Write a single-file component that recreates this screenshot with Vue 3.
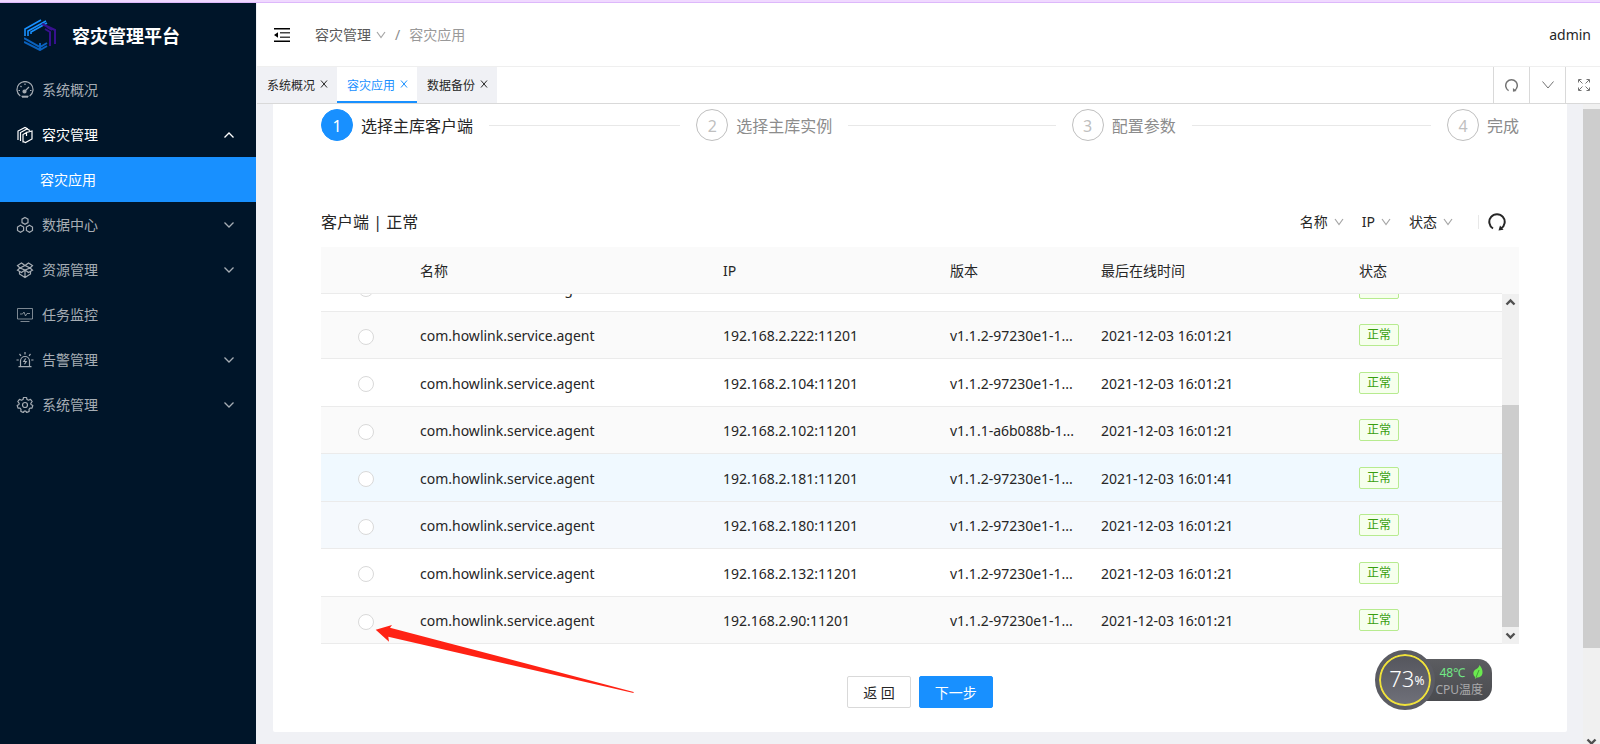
<script setup>
import { ref } from 'vue'

const menu = [
  { key: 'overview', label: '系统概况', arrow: '' },
  { key: 'disaster', label: '容灾管理', arrow: 'up', open: true, children: ['容灾应用'] },
  { key: 'data', label: '数据中心', arrow: 'down' },
  { key: 'resource', label: '资源管理', arrow: 'down' },
  { key: 'monitor', label: '任务监控', arrow: '' },
  { key: 'alarm', label: '告警管理', arrow: 'down' },
  { key: 'system', label: '系统管理', arrow: 'down' },
]
const tabs = ['系统概况', '容灾应用', '数据备份']
const activeTab = ref('容灾应用')
const steps = ['选择主库客户端', '选择主库实例', '配置参数', '完成']
const filters = ['名称', 'IP', '状态']
const columns = ['', '名称', 'IP', '版本', '最后在线时间', '状态']
const v = 'v1.1.2-97230e1-1...'
const rows = [
  { ip: '192.168.2.221:11201', version: v, time: '2021-12-03 16:01:21', tone: '' },
  { ip: '192.168.2.222:11201', version: v, time: '2021-12-03 16:01:21', tone: 'stripe' },
  { ip: '192.168.2.104:11201', version: v, time: '2021-12-03 16:01:21', tone: '' },
  { ip: '192.168.2.102:11201', version: 'v1.1.1-a6b088b-1...', time: '2021-12-03 16:01:21', tone: 'stripe' },
  { ip: '192.168.2.181:11201', version: v, time: '2021-12-03 16:01:41', tone: 'hover' },
  { ip: '192.168.2.180:11201', version: v, time: '2021-12-03 16:01:21', tone: 'fade' },
  { ip: '192.168.2.132:11201', version: v, time: '2021-12-03 16:01:21', tone: '' },
  { ip: '192.168.2.90:11201', version: v, time: '2021-12-03 16:01:21', tone: 'stripe' },
]
const picked = ref('')
</script>

<template>
  <div class="page">
    <div class="strip"></div>
    <div class="shell">
      <aside class="sider">
        <div class="brand">
          <svg class="logo" viewBox="0 0 32 32" fill="none" stroke-width="2">
            <path d="M1 17V10L17 1M4 17V12L22 2M7 15V13L23 4" stroke="#1890ff" stroke-width="1.6" />
            <path d="M0 19L16 28L23 24M0 23L16 31L23 27M16 24V31" stroke="#0a62bf" />
            <path d="M18 5L31 11V25M21 10L26 13V27M23 8L28 11" stroke="#37118f" />
          </svg>
          <h1>容灾管理平台</h1>
        </div>
        <nav class="menu">
          <template v-for="m in menu" :key="m.key">
            <a href="#" class="item" :class="{ open: m.open }">
              <svg class="mi" viewBox="0 0 18 18" fill="none" stroke="currentColor" stroke-width="1.2">
                <template v-if="m.key === 'overview'">
                  <path d="M4.3 15A8 8 0 1 1 13.7 15M5.5 15.4H12.5" />
                  <path d="M6 15.8H12" stroke-width="1.8" />
                  <path d="M8 11L13 6M9 2.5V4M2.5 9.5H4M14 9.5H15.500M4.500 5L5.500 6" />
                  <circle cx="8.500" cy="10.500" r="1.500" fill="currentColor" />
                </template>
                <template v-else-if="m.key === 'disaster'">
                  <path d="M2 14V5L9 1.500L12 3M4.500 15V6.500L11 3L14 4.500M7 16.500V8.500L10.500 6.500V10M10.500 6.500L16 5V13L9.500 16.500L7 15.500" />
                </template>
                <template v-else-if="m.key === 'data'">
                  <path d="M9 1.500L12 3.200V6.600L9 8.300L6 6.600V3.200ZM4.500 9.300L7.600 11V14.400L4.500 16.200L1.500 14.400V11ZM13.500 9.300L16.500 11V14.400L13.500 16.200L10.400 14.400V11Z" />
                </template>
                <template v-else-if="m.key === 'resource'">
                  <path d="M9 4.500L5.500 2L1.500 4.500L4 7L1.500 9.200L5.500 11.500L9 9L12.500 11.500L16.500 9.200L14 7L16.500 4.500L12.500 2ZM4 7L9 4.500L14 7L9 9ZM3.500 10.500V13L9 16.500L14.500 13V10.500M9 9V16" />
                </template>
                <template v-else-if="m.key === 'monitor'">
                  <path d="M1.500 2.500H16.500V13H1.500ZM4.500 15.500H13.500M4 8H6.500L8 6L9.500 10L11 7.500H14" stroke-width="1" opacity=".75" />
                </template>
                <template v-else-if="m.key === 'alarm'">
                  <path d="M4.500 15V10A4.500 4.500 0 0 1 13.500 10V15M2.500 15.700H15.500M9 1V3.500M3.500 3L5 4.800M14.500 3L13 4.800M0.500 9H2.800M15.200 9H17.500M9.700 7.500L7.800 10.500H10.200L8.500 13.200" />
                </template>
                <template v-else>
                  <path d="M7.500 1.500H10.500L11 3.500L12.500 4.200L14.500 3.300L16.200 5.500L14.800 7.300L15 8.500L16.800 9.500L16 12.200L14 12.200L13 13.400L13.200 15.400L10.800 16.500L9.500 15H8.500L7.200 16.500L4.800 15.400L5 13.400L4 12.200L2 12.200L1.200 9.500L3 8.500L3.200 7.300L1.800 5.500L3.500 3.300L5.500 4.200L7 3.500Z" stroke-linejoin="round" />
                  <circle cx="9" cy="9" r="2.500" />
                </template>
              </svg>
              <span class="label">{{ m.label }}</span>
              <svg v-if="m.arrow" class="arrow" :class="m.arrow" viewBox="0 0 10 6"><path d="M0.500 0.500L5 5L9.500 0.500" /></svg>
            </a>
            <a v-for="c in m.children" :key="c" href="#" class="item sub">{{ c }}</a>
          </template>
        </nav>
      </aside>

      <main class="main">
        <header class="topbar">
          <button class="fold" aria-label="收起菜单">
            <svg viewBox="0 0 16 14" width="16" height="14"><path d="M0 0H16V1.500H0ZM0 12.500H16V14H0ZM0 7L4 4.300V9.700Z" /><path d="M6 4H16V5.500H6ZM6 8.500H16V10H6Z" fill="#444" /></svg>
          </button>
          <nav class="crumbs">
            <a href="#">容灾管理</a>
            <svg class="chev" viewBox="0 0 10 8"><path d="M1 1L5 6.500L9 1" /></svg>
            <span class="slash">/</span>
            <span class="here">容灾应用</span>
          </nav>
          <span class="user">admin</span>
        </header>

        <div class="tabbar">
          <div v-for="t in tabs" :key="t" class="tab" :class="{ on: t === activeTab }">
            <button class="tabname" @click="activeTab = t">{{ t }}</button>
            <button class="close" :aria-label="'关闭' + t">
              <svg viewBox="0 0 8 8" width="8" height="8"><path d="M1 0.500L7 7.500M7 0.500L1 7.500" /></svg>
            </button>
          </div>
          <div class="tools">
            <button aria-label="刷新">
              <svg viewBox="0 0 18 18" width="13" height="13" class="reload"><path d="M5 16A8 8 0 1 1 13 16" /><path class="tip" d="M11 12.500L16 16.500L11 17.500Z" /></svg>
            </button>
            <button aria-label="更多">
              <svg viewBox="0 0 12 8" width="12" height="8"><path d="M0.500 0.500L6 7L11.500 0.500" /></svg>
            </button>
            <button aria-label="全屏">
              <svg viewBox="0 0 12 12" width="12" height="12"><path d="M1 1L4.500 4.500M0.500 3.500V0.500H3.500M11 1L7.500 4.500M8.500 0.500H11.500V3.500M1 11L4.500 7.500M0.500 8.500V11.500H3.500M11 11L7.500 7.500M8.500 11.500H11.500V8.500" /></svg>
            </button>
          </div>
        </div>

        <div class="viewport">
          <section class="card">
            <ol class="steps">
              <li v-for="(s, i) in steps" :key="s" class="step" :class="{ on: i === 0 }">
                <span class="num">{{ i + 1 }}</span>
                <span class="name">{{ s }}</span>
              </li>
            </ol>

            <div class="toolbar">
              <h2>客户端 | 正常</h2>
              <div class="filters">
                <button v-for="f in filters" :key="f">
                  {{ f }}
                  <svg class="chev" viewBox="0 0 10 8"><path d="M1 1L5 6.500L9 1" /></svg>
                </button>
                <i class="divider"></i>
                <button class="refresh" aria-label="刷新列表">
                  <svg viewBox="0 0 18 18" width="18" height="18" class="reload"><path d="M5 15.500A7.700 7.700 0 1 1 13 15.500" /><path class="tip" d="M12 12.500L15.500 16.800L10.500 17.500Z" /></svg>
                </button>
              </div>
            </div>

            <div class="thead">
              <table>
                <colgroup><col v-for="n in 6" :key="n" :class="'c' + n" /></colgroup>
                <thead>
                  <tr><th v-for="c in columns" :key="c" scope="col">{{ c }}</th></tr>
                </thead>
              </table>
            </div>
            <div class="tbody">
              <div class="rows">
                <table>
                  <colgroup><col v-for="n in 6" :key="n" :class="'c' + n" /></colgroup>
                  <tbody>
                    <tr v-for="r in rows" :key="r.ip" :class="r.tone">
                      <td class="pick"><input v-model="picked" type="radio" name="client" :value="r.ip" :aria-label="r.ip" /></td>
                      <td>com.howlink.service.agent</td>
                      <td>{{ r.ip }}</td>
                      <td>{{ r.version }}</td>
                      <td>{{ r.time }}</td>
                      <td class="state"><span class="tag">正常</span></td>
                    </tr>
                  </tbody>
                </table>
              </div>
              <div class="scroll inner">
                <svg class="sa" viewBox="0 0 17 17"><path d="M4.500 10.500L8.500 6.500L12.500 10.500" /></svg>
                <div class="thumb"></div>
                <svg class="sa" viewBox="0 0 17 17"><path d="M4.500 6.500L8.500 10.500L12.500 6.500" /></svg>
              </div>
            </div>

            <div class="actions">
              <button class="btn">返 回</button>
              <button class="btn primary">下一步</button>
            </div>
          </section>
          <div class="scroll outer">
            <div class="thumb"></div>
            <svg class="sa" viewBox="0 0 17 17"><path d="M4.500 6.500L8.500 10.500L12.500 6.500" /></svg>
          </div>
        </div>
      </main>
    </div>

    <svg class="pointer" viewBox="0 0 260 70" width="260" height="70">
      <path d="M0.700 4.700L17 0L15 2.700L258.700 67L258.500 68L13.300 11.700L14 16.700Z" fill="#ff2214" />
    </svg>

    <div class="cpu">
      <div class="dial"><span class="load">73</span><span class="pct">%</span></div>
      <div class="temp">
        <span class="deg">48℃
          <svg viewBox="0 0 10 14" width="10" height="14"><path d="M6.500 0C9 3 10 5.500 9.300 9C8.800 11.500 6 13 3.500 12.500L2.500 14L2 12C-0.500 9.500 0 6 2.500 4.500C4.500 3.500 6 2 6.500 0Z" fill="#6be94f" /><path d="M3 12.500L6 5" stroke="#3c8a34" stroke-width=".8" /></svg>
        </span>
        <span>CPU温度</span>
      </div>
    </div>
  </div>
</template>

<style>
body {
  margin: 0;
  overflow: hidden;
}
</style>

<style scoped>
.page {
  position: relative;
  display: flex;
  flex-direction: column;
  height: 100vh;
  overflow: hidden;
  font: 14px/22px "Noto Sans", "Noto Sans CJK SC", sans-serif;
  color: #262626;
  background: #f0f1f5;
}
.page *,
.page *::after {
  box-sizing: border-box;
}
button {
  padding: 0;
  border: 0;
  background: none;
  font: inherit;
  color: inherit;
}
a {
  color: inherit;
  text-decoration: none;
}
svg {
  flex: none;
}
.strip {
  flex: none;
  height: 3px;
  background: #f0d9ff;
  border-bottom: 1px solid #ddb8fb;
}
.shell {
  flex: 1;
  min-height: 0;
  display: flex;
}

/* sidebar */
.sider {
  flex: none;
  width: 256px;
  background: #001529;
  color: #a6adb4;
}
.brand {
  display: flex;
  align-items: center;
  gap: 16px;
  height: 64px;
  padding-left: 24px;
}
.logo {
  width: 32px;
  height: 32px;
}
h1 {
  margin: 0;
  padding-top: 2px;
  font-size: 18px;
  font-weight: 700;
  color: #fff;
}
.item {
  display: flex;
  align-items: center;
  height: 45px;
  padding: 0 22px 0 16px;
}
.item.open {
  color: #fff;
}
.item.sub {
  padding-left: 40px;
  background: #1890ff;
  color: #fff;
}
.mi {
  width: 18px;
  height: 18px;
  margin-right: 8px;
}
.label {
  flex: 1;
}
.arrow {
  width: 10px;
  height: 6px;
  fill: none;
  stroke: currentColor;
  stroke-width: 1.3;
}
.arrow.up {
  transform: rotate(180deg);
}

/* header */
.main {
  flex: 1;
  min-width: 0;
  display: flex;
  flex-direction: column;
  border-left: 1px solid #f0f1f5;
}
.topbar {
  flex: none;
  display: flex;
  align-items: center;
  height: 64px;
  padding: 0 9px 0 17px;
  background: #fff;
  border-bottom: 1px solid #efefef;
}
.fold {
  display: flex;
  margin-right: 25px;
}
.crumbs {
  flex: 1;
  display: flex;
  align-items: center;
  color: #595959;
}
.chev {
  width: 10px;
  height: 8px;
  fill: none;
  stroke: #a6a6a6;
  stroke-width: 1.2;
}
.crumbs .chev {
  margin: 0 9px 0 5px;
}
.slash {
  margin-right: 9px;
  color: #8c8c8c;
}
.here {
  color: #999;
}
.tabbar {
  flex: none;
  display: flex;
  height: 37px;
  background: #fff;
  border-bottom: 1px solid #d9d9d9;
}
.tab {
  display: flex;
  align-items: center;
  gap: 5px;
  width: 80px;
  padding-left: 10px;
  background: #f0f1f5;
  border-bottom: 2px solid #f0f1f5;
  font-size: 12px;
}
.tab.on {
  background: #fff;
  border-color: #1890ff;
  color: #1890ff;
}
.tabname {
  padding-top: 3px;
}
.close {
  display: flex;
}
.close svg,
.tools svg {
  fill: none;
  stroke: currentColor;
}
.tools {
  display: flex;
  margin-left: auto;
  color: #737373;
}
.tools button {
  display: flex;
  align-items: center;
  justify-content: center;
  width: 36px;
  border-left: 1px solid #d9d9d9;
}
.tools button:last-child {
  width: 35px;
  padding-left: 2px;
}
.reload {
  fill: none;
  stroke: currentColor;
  stroke-width: 2;
}
.reload .tip {
  fill: currentColor;
  stroke: none;
}

/* content */
.viewport {
  flex: 1;
  min-height: 0;
  display: flex;
  align-items: flex-start;
}
.card {
  flex: 1;
  min-width: 0;
  margin: 0 16px 12px;
  padding: 5px 48px 24px;
  background: #fff;
  border-radius: 0 0 2px 2px;
}
.steps {
  display: flex;
  margin: 0 0 64px;
  padding: 0;
  list-style: none;
  font-size: 16px;
  line-height: 32px;
}
.step {
  flex: 1;
  display: flex;
  align-items: center;
  height: 32px;
  margin-right: 16px;
  color: #8c8c8c;
  white-space: nowrap;
}
.step:last-child {
  flex: none;
  margin-right: 0;
}
.step:not(:last-child)::after {
  content: "";
  flex: 1;
  height: 1px;
  margin-left: 16px;
  background: #e8e8e8;
}
.name {
  padding-top: 2px;
}
.num {
  flex: none;
  width: 32px;
  height: 32px;
  margin-right: 8px;
  border: 1px solid #bfbfbf;
  border-radius: 50%;
  line-height: 32px;
  text-align: center;
  color: #bfbfbf;
}
.on .num {
  border-color: #1890ff;
  background: #1890ff;
  color: #fff;
}
.on .name {
  color: #262626;
}
.toolbar {
  display: flex;
  align-items: center;
  justify-content: space-between;
  height: 34px;
  margin-bottom: 8px;
}
h2 {
  margin: 0;
  font-size: 16px;
  font-weight: 400;
}
.filters {
  display: flex;
  align-items: center;
  padding-right: 13px;
}
.filters button {
  display: flex;
  align-items: center;
  gap: 6px;
  margin-right: 18px;
}
.divider {
  width: 1px;
  height: 14px;
  margin: 0 9px 0 7px;
  background: #e8e8e8;
}
.filters .refresh {
  margin: 0;
}

/* table */
table {
  width: 100%;
  table-layout: fixed;
  border-collapse: separate;
  border-spacing: 0;
}
.c1 { width: 87px; }
.c2 { width: 303px; }
.c3 { width: 227px; }
.c4 { width: 151px; }
.c5 { width: 258px; }
.c6 { width: 155px; }
th,
td {
  height: 47px;
  padding: 2px 12px 0;
  border-bottom: 1px solid #ebebeb;
  font-weight: 400;
  text-align: left;
  vertical-align: middle;
  white-space: nowrap;
  overflow: hidden;
  text-overflow: ellipsis;
}
tr:nth-child(odd) td {
  height: 48px;
}
.thead {
  padding-right: 17px;
  background: #fafafa;
}
.tbody {
  display: flex;
  height: 350px;
}
.rows {
  flex: 1;
  display: flex;
  align-items: flex-end;
  overflow: hidden;
}
.stripe { background: #fafafa; }
.hover { background: #f0f9ff; }
.fade { background: #f5f9fd; }
.pick {
  padding: 3px 0 0 37px;
}
.state {
  padding-top: 0;
}
input[type="radio"] {
  appearance: none;
  display: block;
  width: 16px;
  height: 16px;
  margin: 0;
  border: 1px solid #d9d9d9;
  border-radius: 50%;
  background: #fff;
}
input[type="radio"]:checked {
  border: 5px solid #1890ff;
}
.tag {
  display: block;
  width: max-content;
  padding: 0 7px;
  border: 1px solid #b7eb8f;
  border-radius: 2px;
  background: #f6ffed;
  color: #389e0d;
  font-size: 12px;
  line-height: 20px;
}
.scroll {
  flex: none;
  display: flex;
  flex-direction: column;
  justify-content: space-between;
  width: 17px;
  background: #f0f0f0;
}
.scroll .thumb {
  background: #cdcdcd;
}
.sa {
  width: 17px;
  height: 17px;
  fill: none;
  stroke: #505050;
  stroke-width: 2.4;
}
.inner .thumb {
  height: 222px;
  margin-top: auto;
}
.outer {
  height: calc(100% + 6px);
  padding-top: 5px;
}
.outer .thumb {
  height: 539px;
}
.actions {
  display: flex;
  justify-content: center;
  gap: 8px;
  margin-top: 32px;
}
.btn {
  height: 32px;
  padding: 2px 15px 0;
  border: 1px solid #d9d9d9;
  border-radius: 2px;
  background: #fff;
}
.btn.primary {
  border-color: #1890ff;
  background: #1890ff;
  color: #fff;
}

/* floating overlays */
.pointer {
  position: absolute;
  left: 375px;
  top: 625px;
}
.cpu {
  position: absolute;
  right: 108px;
  bottom: 34px;
  display: flex;
  align-items: center;
}
.dial {
  display: flex;
  align-items: center;
  justify-content: center;
  width: 60px;
  height: 60px;
  padding: 0 0 4px 3px;
  border: 4px solid #5b5c63;
  border-radius: 50%;
  background: linear-gradient(#54555c, #70717a);
  box-shadow: inset 0 0 0 2px #f0e23a;
  color: #fff;
  z-index: 1;
}
.load {
  font: 22px/28px "Noto Sans", sans-serif;
  font-weight: 300;
}
.pct {
  font-size: 12px;
  line-height: 14px;
  padding-top: 6px;
}
.temp {
  display: flex;
  flex-direction: column;
  justify-content: center;
  height: 42px;
  margin-left: -28px;
  padding: 1px 9px 0 28px;
  border-radius: 0 14px 14px 0;
  background: linear-gradient(#5c5d61, #4a4b4f);
  color: #a9a9ab;
  font-size: 12px;
  line-height: 17px;
}
.deg {
  display: flex;
  align-items: center;
  justify-content: space-between;
  padding-left: 4px;
  color: #72ea86;
}
</style>
